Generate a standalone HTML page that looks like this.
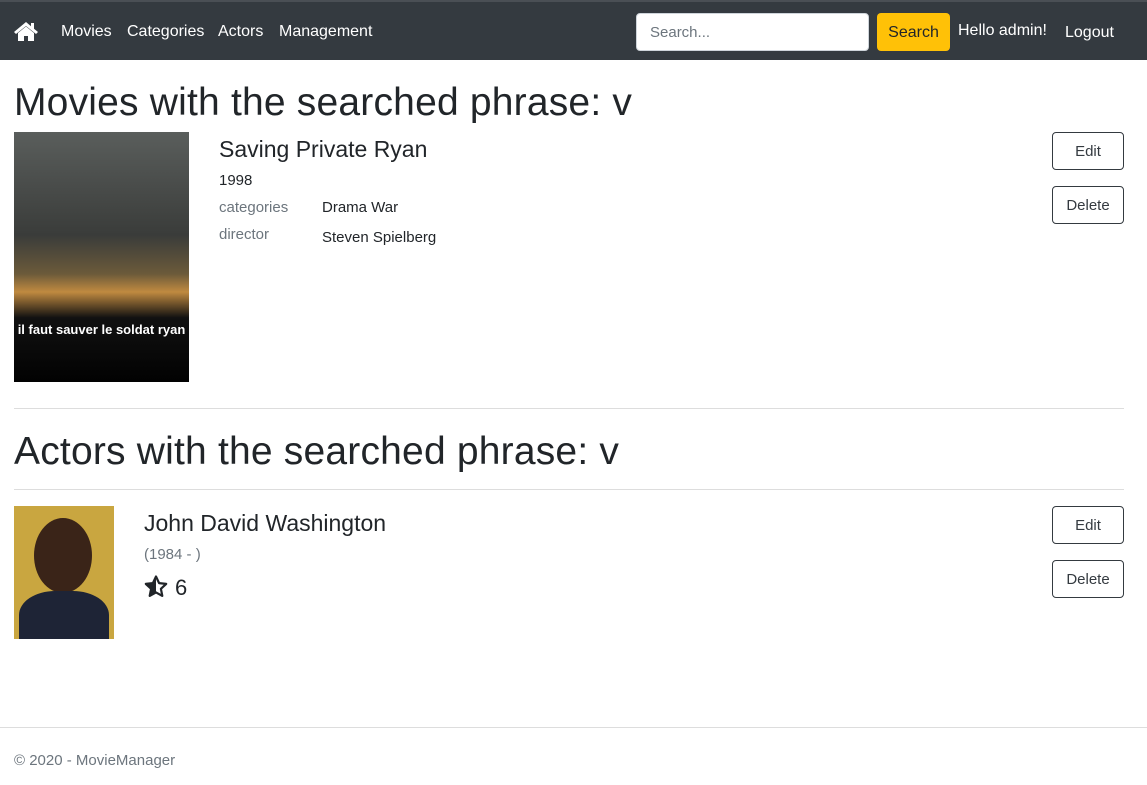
<!DOCTYPE html>
<html><head><meta charset="utf-8"><style>
*{box-sizing:border-box;margin:0;padding:0}
body{width:1147px;height:785px;font-family:"Liberation Sans",sans-serif;color:#212529;background:#fff;position:relative;overflow:hidden}
.nav{position:absolute;left:0;top:0;width:1147px;height:60px;background:#343a40;border-top:2px solid #4a4f55}
.nav a{position:absolute;top:21px;color:#fff;font-size:16px;text-decoration:none}
.search{position:absolute;left:636px;top:11px;width:233px;height:38px;border:1px solid #ced4da;border-radius:4px;background:#fff;color:#6c757d;font-size:15px;padding:10px 13px}
.sbtn{position:absolute;left:877px;top:11px;width:73px;height:38px;background:#ffc107;border-radius:4px;font-size:16px;text-align:center;line-height:40px;color:#212529}
h1{position:absolute;left:14px;font-weight:400;font-size:39px;color:#212529;letter-spacing:0.2px}
.btn{position:absolute;left:1052px;width:72px;height:38px;border:1px solid #343a40;border-radius:4px;font-size:15px;text-align:center;line-height:38px;color:#343a40}
.t{position:absolute;font-size:15px}
hr{position:absolute;left:14px;width:1110px;border:0;border-top:1px solid #ddd}
</style></head><body>
<div class="nav">
<svg style="position:absolute;left:14px;top:20px" width="24" height="19" viewBox="0 0 24 19"><path d="M12 0L0 10l2 2 10-8 10 8 2-2-4-3.3V1h-3v3.2z" fill="#fff"/><path d="M4 11v8h6v-5h4v5h6v-8l-8-6.5z" fill="#fff"/></svg>
<a style="left:61px">Movies</a><a style="left:127px">Categories</a><a style="left:218px">Actors</a><a style="left:279px">Management</a>
<div class="search">Search...</div><div class="sbtn">Search</div>
<a style="left:958px;top:20px">Hello admin!</a><a style="left:1065px;top:22px">Logout</a>
</div>
<h1 style="top:81px">Movies with the searched phrase: v</h1>
<div style="position:absolute;left:14px;top:132px;width:175px;height:258px;background:linear-gradient(#5a5e5c 0%,#3a3c3a 40%,#6b5a3a 55%,#c08a40 62%,#111 72%,#000 100%)">
<div style="position:absolute;left:0;top:190px;width:175px;text-align:center;color:#fff;font-weight:bold;font-size:13px">il faut sauver le soldat ryan</div>
<div style="position:absolute;left:0;bottom:0;width:175px;height:8px;background:#fff"></div></div>
<div class="t" style="left:219px;top:136px;font-size:23px">Saving Private Ryan</div>
<div class="t" style="left:219px;top:172px">1998</div>
<div class="t" style="left:219px;top:199px;color:#6c757d">categories</div>
<div class="t" style="left:322px;top:199px">Drama War</div>
<div class="t" style="left:219px;top:226px;color:#6c757d">director</div>
<div class="t" style="left:322px;top:229px">Steven Spielberg</div>
<div class="btn" style="top:132px">Edit</div><div class="btn" style="top:186px">Delete</div>
<hr style="top:408px">
<h1 style="top:430px">Actors with the searched phrase: v</h1>
<hr style="top:489px">
<div style="position:absolute;left:14px;top:506px;width:100px;height:133px;background:#c9a640;overflow:hidden">
<div style="position:absolute;left:20px;top:12px;width:58px;height:75px;border-radius:50%;background:#3a2418"></div>
<div style="position:absolute;left:5px;top:85px;width:90px;height:60px;border-radius:40% 40% 0 0;background:#1e2436"></div></div>
<div class="t" style="left:144px;top:510px;font-size:23px">John David Washington</div>
<div class="t" style="left:144px;top:546px;color:#6c757d">(1984 - )</div>
<svg style="position:absolute;left:144px;top:575px" width="24" height="23" viewBox="0 0 24 23"><path d="M12 1.5l3.1 6.6 7.1.8-5.3 4.9 1.4 7.1L12 17.4 5.7 20.9l1.4-7.1L1.8 8.9l7.1-.8z" fill="none" stroke="#212529" stroke-width="2.2" stroke-linejoin="round"/><path d="M12 1.5v15.9L5.7 20.9l1.4-7.1L1.8 8.9l7.1-.8z" fill="#212529"/></svg>
<div class="t" style="left:175px;top:575px;font-size:22px">6</div>
<div class="btn" style="top:506px">Edit</div><div class="btn" style="top:560px">Delete</div>
<div style="position:absolute;left:0;top:727px;width:1147px;border-top:1px solid #ddd"></div>
<div class="t" style="left:14px;top:752px;color:#6c757d">© 2020 - MovieManager</div>
</body></html>
